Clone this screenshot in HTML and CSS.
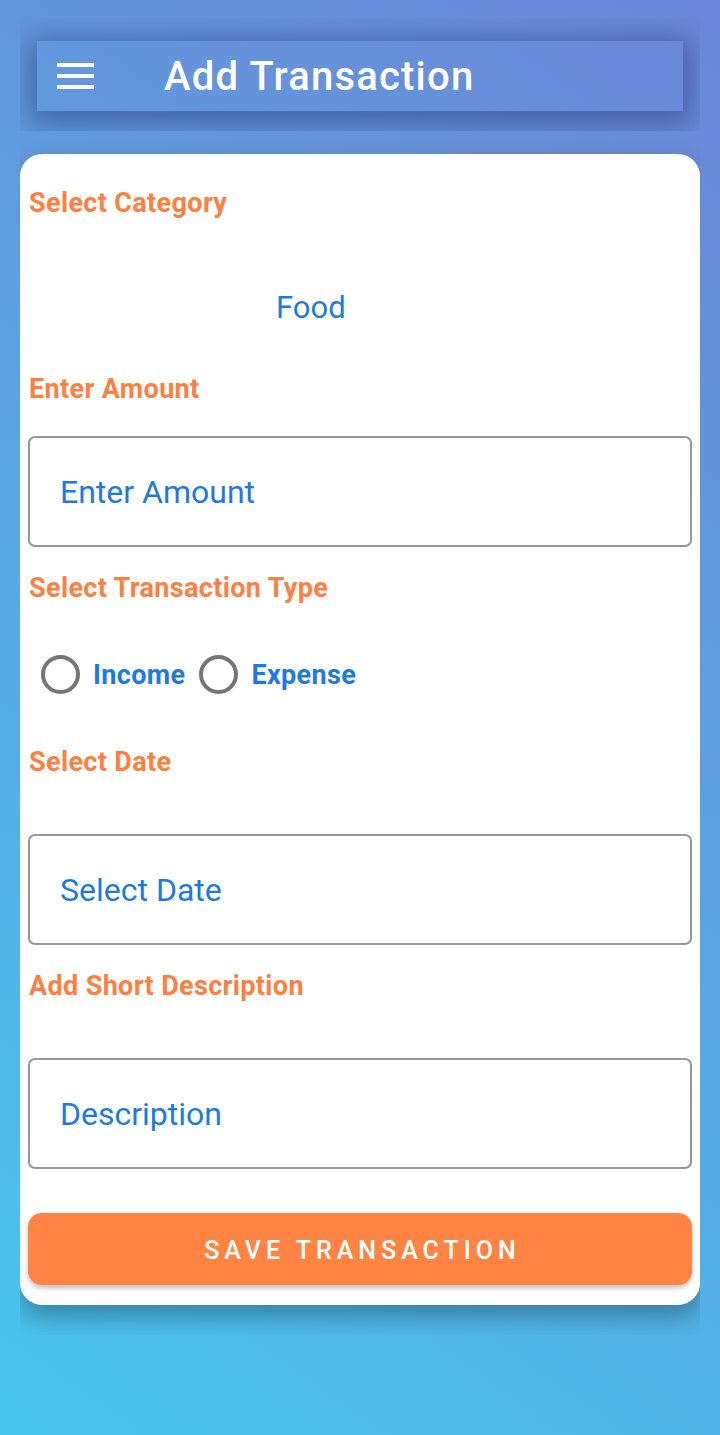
FILE: index.html
```html
<!DOCTYPE html>
<html lang="en">
<head>
<meta charset="utf-8">
<title>Add Transaction</title>
<link rel="stylesheet" href="styles.css">
</head>
<body>
<div class="frame">
  <div class="header">
    <div class="appbar">
      <div class="menu" aria-label="menu">
        <span></span><span></span><span></span>
      </div>
      <h1 class="title">Add Transaction</h1>
    </div>
  </div>
  <div class="card">
    <div class="label label-first">Select Category</div>
    <div class="category">Food</div>
    <div class="label label-amount">Enter Amount</div>
    <div class="field field-amount">Enter Amount</div>
    <div class="label label-type">Select Transaction Type</div>
    <div class="radios">
      <div class="radio"><span class="circle"></span><span class="radio-text">Income</span></div>
      <div class="radio"><span class="circle"></span><span class="radio-text">Expense</span></div>
    </div>
    <div class="label label-date">Select Date</div>
    <div class="field field-date">Select Date</div>
    <div class="label label-desc">Add Short Description</div>
    <div class="field field-desc">Description</div>
    <button class="save">SAVE TRANSACTION</button>
  </div>
</div>
</body>
</html>
```
FILE: styles.css
```css
html, body {
  margin: 0;
  padding: 0;
}
body {
  min-height: 1435px;
  background: linear-gradient(215deg, #6c86d7 0%, #48c5ee 100%);
  font-family: Roboto, "Noto Sans", sans-serif;
}
.frame {
  margin: 18px 20px 0;
  overflow: hidden;
  padding-bottom: 30px;
}
.header {
  overflow: hidden;
  padding: 23px 17px 20px;
}
.appbar {
  height: 70px;
  display: flex;
  align-items: center;
  box-shadow: 0 6px 26px 8px rgba(25, 40, 100, 0.42);
}
.menu {
  width: 37px;
  margin-left: 20px;
  display: flex;
  flex-direction: column;
  gap: 7px;
}
.menu span {
  display: block;
  height: 4px;
  background: #ffffff;
}
.title {
  margin: 2px 0 0 70px;
  font-size: 40px;
  font-weight: 500;
  line-height: 70px;
  color: #ffffff;
  letter-spacing: 1.2px;
}
.card {
  margin-top: 23px;
  background: #ffffff;
  border-radius: 22px;
  padding: 33px 8px 20px;
  box-shadow: 0 12px 24px rgba(0, 0, 0, 0.3);
}
.label {
  font-size: 27px;
  font-weight: 700;
  line-height: 32px;
  color: #ff7f41;
  padding-left: 1px;
  letter-spacing: 0.35px;
}
.category {
  margin-top: 71px;
  margin-left: 248px;
  font-size: 31px;
  line-height: 36px;
  color: #1f7ae0;
}
.label-amount { margin-top: 47px; }
.field {
  box-sizing: border-box;
  height: 111px;
  border: 2px solid #979797;
  border-radius: 7px;
  display: flex;
  align-items: center;
  padding-left: 30px;
  font-size: 32px;
  color: #1f7ae0;
}
.field-amount { margin-top: 31px; }
.label-type { margin-top: 25px; }
.radios {
  margin-top: 51px;
  display: flex;
  align-items: center;
  padding-left: 13px;
  height: 39px;
}
.radio {
  display: flex;
  align-items: center;
}
.circle {
  box-sizing: border-box;
  width: 39px;
  height: 39px;
  border: 4px solid #757575;
  border-radius: 50%;
}
.radio-text {
  margin-left: 13px;
  margin-right: 14px;
  font-size: 27px;
  font-weight: 700;
  color: #1f7ae0;
  letter-spacing: 0.35px;
}
.label-date { margin-top: 52px; }
.field-date { margin-top: 56px; }
.label-desc { margin-top: 25px; }
.field-desc { margin-top: 56px; }
.save {
  display: block;
  width: 100%;
  margin-top: 44px;
  height: 72px;
  border: none;
  border-radius: 14px;
  background: #ff8443;
  color: #ffffff;
  font-family: Roboto, "Noto Sans", sans-serif;
  font-size: 25px;
  font-weight: 500;
  letter-spacing: 5px;
  padding: 2px 0 0 5px;
  box-shadow: 0 3px 5px rgba(0, 0, 0, 0.25);
}
```
